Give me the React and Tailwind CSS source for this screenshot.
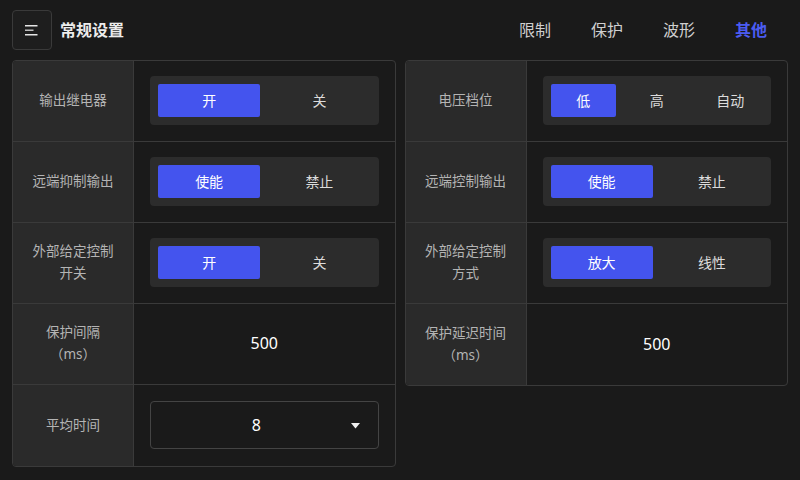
import React from "react";

const font = { fontFamily: '"Noto Sans", "Noto Sans CJK SC", sans-serif' };

function Seg({ options, active }) {
  return (
    <div className="flex w-full gap-2 rounded-[4px] bg-[#2c2c2c] p-2">
      {options.map((o, i) => (
        <div
          key={o}
          className={
            "flex h-[33px] flex-1 items-center justify-center rounded-[2px] text-[14px] " +
            (i === active ? "bg-[#4454ee] text-white" : "text-[#dcdcdc]")
          }
        >
          {o}
        </div>
      ))}
    </div>
  );
}

function Row({ label, children, last }) {
  return (
    <div className={"flex h-[81px] " + (last ? "" : "border-b border-[#3a3a3a]")}>
      <div className="flex w-[121px] shrink-0 items-center justify-center border-r border-[#3a3a3a] bg-[#2a2a2a] px-2 pb-[2px] text-center text-[13.5px] leading-[22px] text-[#b4b4b4]">
        {label}
      </div>
      <div className="flex flex-1 items-center justify-center px-4 pb-[2px]">{children}</div>
    </div>
  );
}

function Value({ v }) {
  return <div className="text-[16px] text-white">{v}</div>;
}

export default function App() {
  return (
    <div className="h-[480px] w-[800px] overflow-hidden bg-[#1a1a1a]" style={font}>
      <div className="flex h-[60px] items-center pl-3 pr-[13px]">
        <div className="flex h-10 w-10 items-center justify-center rounded-[4px] border border-[#3a3a3a] bg-[#1e1e1e]">
          <svg width="14" height="12" viewBox="0 0 14 12">
            <rect x="0" y="1" width="12.5" height="1.5" fill="#e6e6e6" />
            <rect x="0" y="5.5" width="8.5" height="1.5" fill="#bdbdbd" />
            <rect x="0" y="10" width="12.5" height="1.5" fill="#e6e6e6" />
          </svg>
        </div>
        <div className="ml-2 text-[16px] font-bold text-[#ececec]">常规设置</div>
        <div className="ml-auto flex">
          {["限制", "保护", "波形", "其他"].map((t, i) => (
            <div
              key={t}
              className={
                "px-5 text-[16px] " +
                (i === 3 ? "font-bold text-[#4b5cf2]" : "text-[#cfcfcf]")
              }
            >
              {t}
            </div>
          ))}
        </div>
      </div>
      <div className="flex items-start gap-[9px] px-3">
        <div className="flex-1 overflow-hidden rounded-[4px] border border-[#3a3a3a]">
          <Row label="输出继电器">
            <Seg options={["开", "关"]} active={0} />
          </Row>
          <Row label="远端抑制输出">
            <Seg options={["使能", "禁止"]} active={0} />
          </Row>
          <Row label={<span>外部给定控制<br />开关</span>}>
            <Seg options={["开", "关"]} active={0} />
          </Row>
          <Row label={<span>保护间隔<br />（ms）</span>}>
            <Value v="500" />
          </Row>
          <Row label="平均时间" last>
            <div className="relative flex h-[48px] w-full items-center justify-center rounded-[4px] border border-[#444444] pl-3 pr-[28px]">
              <span className="text-[16px] text-white">8</span>
              <svg className="absolute right-[18px] top-[21px]" width="9" height="6" viewBox="0 0 9 6">
                <path d="M0 0 L9 0 L4.5 5.5 Z" fill="#f0f0f0" />
              </svg>
            </div>
          </Row>
        </div>
        <div className="flex-1 overflow-hidden rounded-[4px] border border-[#3a3a3a]">
          <Row label="电压档位">
            <Seg options={["低", "高", "自动"]} active={0} />
          </Row>
          <Row label="远端控制输出">
            <Seg options={["使能", "禁止"]} active={0} />
          </Row>
          <Row label={<span>外部给定控制<br />方式</span>}>
            <Seg options={["放大", "线性"]} active={0} />
          </Row>
          <Row label={<span>保护延迟时间<br />（ms）</span>} last>
            <Value v="500" />
          </Row>
        </div>
      </div>
    </div>
  );
}
